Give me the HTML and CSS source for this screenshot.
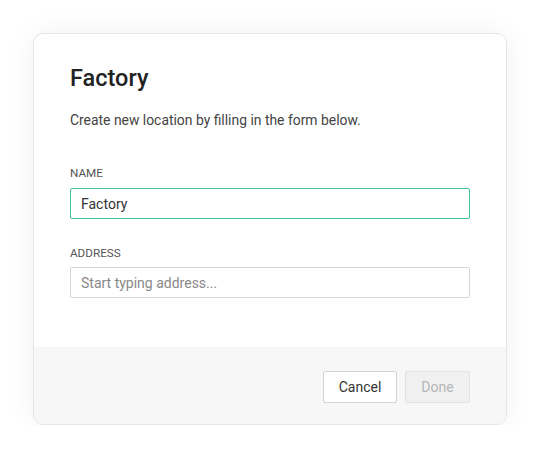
FILE: index.html
```html
<!DOCTYPE html>
<html>
<head>
<meta charset="utf-8">
<link rel="stylesheet" href="styles.css">
</head>
<body>
<div class="modal">
  <div class="modal-body">
    <h1 class="title">Factory</h1>
    <p class="desc">Create new location by filling in the form below.</p>
    <div class="field">
      <label class="label">NAME</label>
      <input class="input input-active" type="text" value="Factory">
    </div>
    <div class="field">
      <label class="label">ADDRESS</label>
      <input class="input" type="text" placeholder="Start typing address...">
    </div>
  </div>
  <div class="modal-footer">
    <button class="btn">Cancel</button>
    <button class="btn btn-disabled">Done</button>
  </div>
</div>
</body>
</html>
```
FILE: styles.css
```css
html, body { margin: 0; padding: 0; background: #fff; }
body {
  font-family: Roboto, "Liberation Sans", sans-serif;
  padding: 33px 33px 0 33px;
}
.modal {
  width: 472px;
  border: 1px solid #e6e6e6;
  border-radius: 10px;
  background: #fff;
  box-shadow: 0 0 30px rgba(0,0,0,0.06);
  overflow: hidden;
}
.modal-body {
  padding: 30px 36px 49px 36px;
}
.title {
  margin: 0;
  font-size: 23.5px;
  font-weight: 500;
  color: #222;
  line-height: 28px;
}
.desc {
  margin: 19px 0 0 0;
  font-size: 13.9px;
  color: #444;
  line-height: 18px;
}
.field { margin-top: 37px; }
.field + .field { margin-top: 27px; }
.label {
  display: block;
  font-size: 11.7px;
  color: #555;
  line-height: 14px;
  margin-bottom: 8px;
}
.field + .field .label { margin-bottom: 7px; }
.input {
  display: block;
  box-sizing: border-box;
  width: 400px;
  height: 31px;
  border: 1px solid #d6d6d6;
  border-radius: 2px;
  padding: 0 10px;
  font-family: inherit;
  font-size: 14px;
  color: #333;
  outline: none;
  background: #fff;
}
.input::placeholder { color: #888; }
.input-active { border-color: #3ec59a; }
.modal-footer {
  background: #f7f7f7;
  height: 77px;
  padding: 24px 36px 0 36px;
  box-sizing: border-box;
  display: flex;
  justify-content: flex-end;
  align-items: flex-start;
  gap: 8px;
}
.btn {
  height: 32px;
  width: 74px;
  padding: 0;
  font-family: inherit;
  font-size: 14px;
  color: #333;
  background: #fff;
  border: 1px solid #d2d2d2;
  border-radius: 2px;
}
.btn-disabled {
  width: 65px;
  background: #f0f0f0;
  color: #b5b5b5;
  border-color: #e3e3e3;
}
```
